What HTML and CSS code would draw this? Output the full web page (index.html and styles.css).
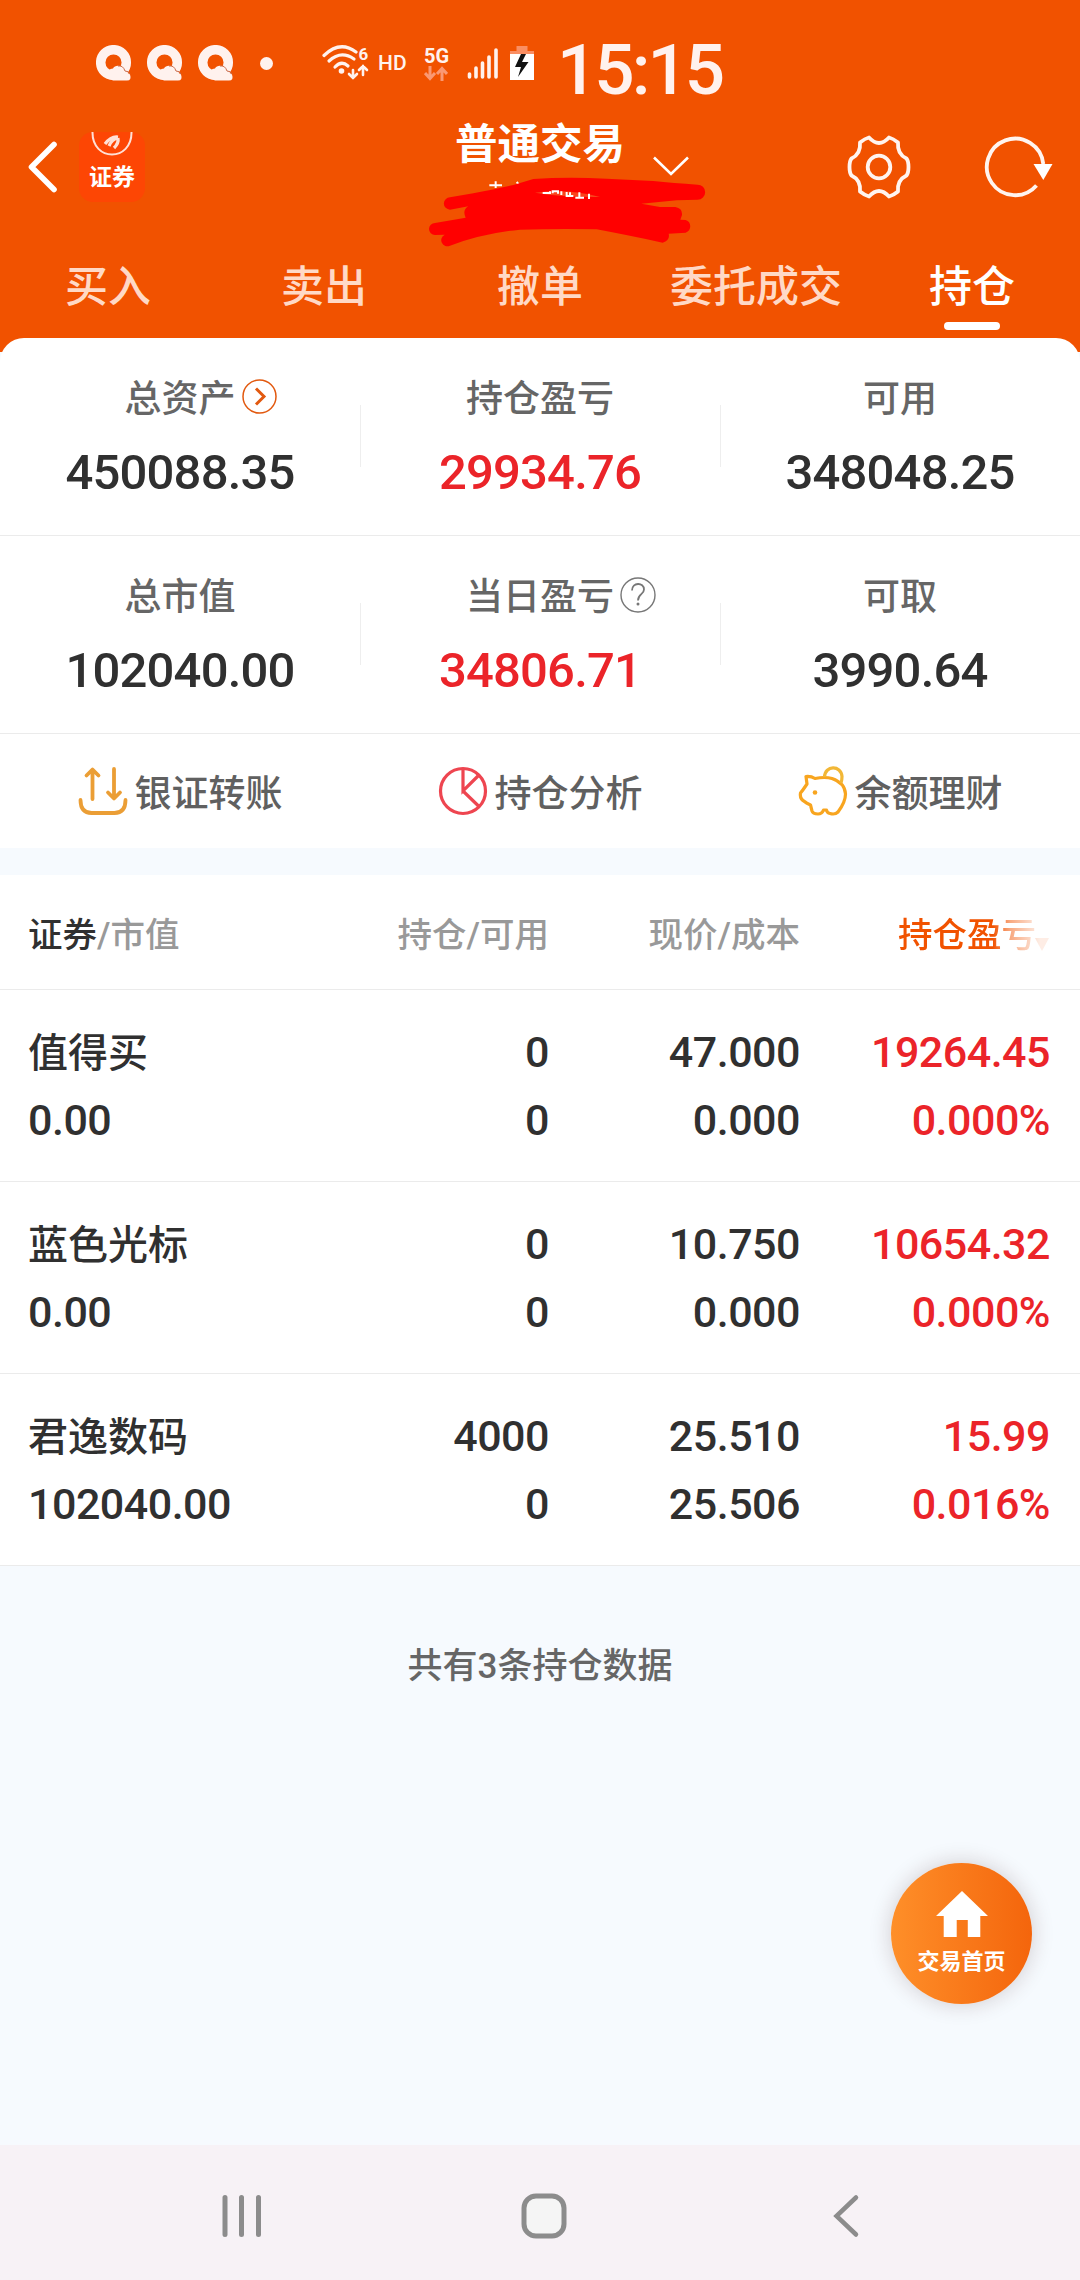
FILE: index.html
```html
<!DOCTYPE html>
<html lang="zh-CN">
<head>
  <meta charset="UTF-8" />
  <meta name="viewport" content="width=device-width, initial-scale=1.0"/>
  <title>普通交易 – 持仓</title>
  <link rel="stylesheet" href="styles.css">
</head>
<body>
  <div class="page">
    <div class="header">
      <div class="status-bar">
        <svg class="q-icons" width="138" height="36" viewBox="0 0 138 36">
          <defs>
            <g id="q">
              <circle cx="17.5" cy="17.5" r="12.8" fill="none" stroke="#fff2ee" stroke-width="9.5"/>
              <path d="M17 35.500a6.500 6.500 0 0 1-4-10q1-2 4-2c2-4 9-4 11 2l6 4q2 6-3 6z" fill="#fff2ee"/>
              <path d="M22 21q5-1 7 5q4 0 5 3" fill="none" stroke="#c96a4a" stroke-width="1"/>
            </g>
          </defs>
          <use href="#q"/>
          <use href="#q" x="51"/>
          <use href="#q" x="102"/>
        </svg>
        <span class="dot"></span>
        <svg class="wifi" width="52" height="52" viewBox="0 -8 52 52" fill="none" stroke="#fff2ee" stroke-width="3.2" stroke-linecap="round">
          <path d="M2 10.500Q18-5 34 7"/>
          <path d="M7 16Q19 5 32 14"/>
          <path d="M13 22Q19.500 15 26 21"/>
          <circle cx="19.500" cy="26" r="2.800" fill="#fff2ee" stroke="none"/>
          <path d="M31 25v8m-4-4l4 4l4-4M41 30v-9m-4 4l4-4l4 4" stroke-width="2.600"/>
          <text x="36.500" y="14.500" class="wifi-gen">6</text>
        </svg>
        <span class="hd">HD</span>
        <div class="network">
          <span>5G</span>
          <svg width="24" height="15" viewBox="0 0 24 15" fill="none" stroke="#fa9873" stroke-width="3">
            <path d="M6 0v12M1 7l5 5.500L11 7M18 15V3M13 8l5-5.500L23 8"/>
          </svg>
        </div>
        <svg class="signal" width="32" height="31" viewBox="0 0 32 31" stroke="#fff2ee" stroke-width="3.600" stroke-linecap="round">
          <path d="M2.500 26v3M9 20v9M15.500 15v14M22 9v20M29 2v27"/>
        </svg>
        <svg class="battery" width="24" height="34" viewBox="0 0 24 34">
          <path d="M6.500 0h11v5H24v3.500H0V5h6.500z" fill="#fa8e62"/>
          <path d="M0 8h24v26H0z" fill="#fff"/>
          <path d="M11 8L5 21h6l-3 10L18.500 16H12l4-8z" fill="#111"/>
        </svg>
        <span class="clock">15:15</span>
      </div>

      <div class="title-bar">
        <div class="title-left">
          <svg width="30" height="52" viewBox="0 0 30 52" fill="none" stroke="#fff" stroke-width="5.600" stroke-linecap="round" stroke-linejoin="round">
            <path d="M26 3.500L3.500 26L26 48.500"/>
          </svg>
          <div class="logo">
            <svg width="42" height="26" viewBox="0 0 42 26" fill="none" stroke="#ffe0d6" stroke-width="2">
              <path d="M1.500 0C1 30 41 30 40.500 0"/>
              <path d="M14 12q6-8 13-7M18 14q3-7 9-8M23 16q5-5 4-10" stroke-width="3.200"/>
            </svg>
            <span>证券</span>
          </div>
        </div>
        <div class="title">
          <h1>普通交易</h1>
          <svg class="chevron" width="36" height="20" viewBox="0 0 36 20" fill="none" stroke="#fff" stroke-width="2.600">
            <path d="M1 1.500L18 18L35 1.500"/>
          </svg>
          <svg class="scribble" width="290" height="75" viewBox="0 195 870 225">
            <path d="M208 226h38M227 214v20M290 216l12 14" stroke="#fff" stroke-width="6" fill="none"/>
            <path d="M90 262L160 250Q230 237 280 225L340 207Q440 200 560 206L700 213Q760 219 833 224a22 22 0 0 1 0 45L770 271L664 281L720 291H766q22 4 20 24l-5 14L797 330a20 20 0 0 1 0 38L746 371q5 20-18 27Q620 375 530 358Q410 356 300 359Q190 370 90 407a18 18 0 0 1-16-33L45 375a18 18 0 0 1 0-36L137 323Q126 300 145 289L90 299a18 18 0 0 1 0-37z" fill="#f00"/>
            <path d="M345 248Q450 236 540 261Q430 262 345 248z" fill="#f9431c"/>
            <path d="M368 249h22v-5M398 250v-6h16v7M424 244v11M440 246v12h20M450 247v12M466 263h26M478 247v16M507 251v16" fill="none" stroke="#fff" stroke-width="6"/>
          </svg>
        </div>
        <div class="title-right">
          <svg width="64" height="64" viewBox="-32 -32 64 64" fill="none" stroke="#fff4ef" stroke-width="3.800" stroke-linejoin="round">
            <path d="M-10-29.500Q-14-28.500-19-24.500Q-18-13-27.500-8.500Q-29.500-6-29.500 0T-27.500 8.500Q-18 13-19 24.500Q-14 28.500-10 29.500Q-5 24 0 24T10 29.500Q14 28.500 19 24.500Q18 13 27.500 8.500Q29.500 6 29.500 0T27.500-8.500Q18-13 19-24.500Q14-28.500 10-29.500Q5-24 0-24T-10-29.500z"/>
            <circle r="11.300"/>
          </svg>
          <svg width="70" height="64" viewBox="-32 -32 70 64" fill="none" stroke="#fff4ef" stroke-width="3.800">
            <path d="M21.500 18.500A28.300 28.300 0 1 1 28.300-3"/>
            <path d="M18.500-3h19L28.300 13z" fill="#fff" stroke="none"/>
          </svg>
        </div>
      </div>

      <div class="tabs">
        <div class="tab">买入</div>
        <div class="tab">卖出</div>
        <div class="tab">撤单</div>
        <div class="tab">委托成交</div>
        <div class="tab active">持仓</div>
      </div>
    </div>

    <div class="summary">
      <div class="summary-row">
        <div class="summary-item">
          <div class="label">总资产
            <svg class="label-icon" width="35" height="35" viewBox="0 0 35 35" fill="none" stroke="#e2590f">
              <circle cx="17.500" cy="17.500" r="16.500" stroke-width="1.500"/>
              <path d="M14 9.500l8 8l-8 8" stroke-width="3"/>
            </svg>
          </div>
          <div class="value">450088.35</div>
        </div>
        <div class="summary-item">
          <div class="label">持仓盈亏</div>
          <div class="value red">29934.76</div>
        </div>
        <div class="summary-item">
          <div class="label">可用</div>
          <div class="value">348048.25</div>
        </div>
      </div>
      <div class="summary-row">
        <div class="summary-item">
          <div class="label">总市值</div>
          <div class="value">102040.00</div>
        </div>
        <div class="summary-item">
          <div class="label">当日盈亏
            <svg class="label-icon" width="36" height="36" viewBox="0 0 36 36" fill="none" stroke="#777">
              <circle cx="18" cy="18" r="17" stroke-width="1.400"/>
              <path d="M12 13.500c0-8.500 12-8.500 12-1c0 5-6 4.500-6 11" stroke-width="1.800"/>
              <circle cx="18" cy="27" r="1.500" fill="#777" stroke="none"/>
            </svg>
          </div>
          <div class="value red">34806.71</div>
        </div>
        <div class="summary-item">
          <div class="label">可取</div>
          <div class="value">3990.64</div>
        </div>
      </div>
    </div>

    <div class="actions">
      <div class="action">
        <svg width="50" height="50" viewBox="0 0 50 50" fill="none" stroke="#eb9e35" stroke-width="3.800" stroke-linecap="round" stroke-linejoin="round">
          <path d="M2.500 34c0 9 4 13 11 13h23c7 0 11-4 11-13M14.500 33V4M8.500 9.500L14.500 3.500L20.500 9.500M36 3v29M30 26.500l6 6l6-6"/>
        </svg>
        <span>银证转账</span>
      </div>
      <div class="action">
        <svg width="50" height="50" viewBox="0 0 50 50" fill="none" stroke="#ee4550" stroke-width="3.200">
          <circle cx="25" cy="25" r="22.500"/>
          <path d="M25 2.500V25L41 9M25 25l16 15.500"/>
        </svg>
        <span>持仓分析</span>
      </div>
      <div class="action">
        <svg width="50" height="50" viewBox="0 0 50 50" fill="none" stroke="#f8a51f" stroke-width="3.200" stroke-linejoin="round">
          <path d="M8 10.500Q13 10 17 12.500Q27 10.500 34 12.500Q47 17 47.500 28Q47.500 36 40 46Q37 49 32 47.500Q29 47 28.500 44H25.500Q24 48 20 48Q15 48 14 45L12.500 39Q8 37 6.500 35.500Q1.500 33 2.500 27Q5 24 9 18z"/>
          <path d="M26.500 11C27-1 43-1 44 10.500Q44 14 43 17" stroke="#f2b736"/>
          <circle cx="17" cy="26.500" r="2.300" fill="#f8a51f" stroke="none"/>
        </svg>
        <span>余额理财</span>
      </div>
    </div>

    <div class="holdings">
      <div class="row head">
        <div><b>证券</b>/市值</div>
        <div>持仓/可用</div>
        <div>现价/成本</div>
        <div class="sort"><span>持仓盈亏</span><i></i></div>
      </div>
      <div class="row">
        <div><p class="name">值得买</p><p>0.00</p></div>
        <div><p>0</p><p>0</p></div>
        <div><p>47.000</p><p>0.000</p></div>
        <div class="red"><p>19264.45</p><p>0.000%</p></div>
      </div>
      <div class="row">
        <div><p class="name">蓝色光标</p><p>0.00</p></div>
        <div><p>0</p><p>0</p></div>
        <div><p>10.750</p><p>0.000</p></div>
        <div class="red"><p>10654.32</p><p>0.000%</p></div>
      </div>
      <div class="row">
        <div><p class="name">君逸数码</p><p>102040.00</p></div>
        <div><p>4000</p><p>0</p></div>
        <div><p>25.510</p><p>25.506</p></div>
        <div class="red"><p>15.99</p><p>0.016%</p></div>
      </div>
    </div>

    <p class="count">共有3条持仓数据</p>

    <div class="home-button">
      <svg width="52" height="46" viewBox="0 0 54 46" fill="#fff" preserveAspectRatio="none">
        <path d="M27 0L54 25H46V46H33V29H21.500V46H8V25H0z"/>
      </svg>
      <span>交易首页</span>
    </div>

    <div class="nav-bar">
      <svg width="42" height="44" viewBox="0 0 42 44" stroke="#8c8c8c" stroke-width="5" stroke-linecap="round">
        <path d="M4 3.500v37M20.500 3.500v37M37.500 3.500v37"/>
      </svg>
      <svg class="nav-home" width="46" height="46" viewBox="0 0 46 46">
        <rect x="3" y="3" width="40" height="40" rx="12" fill="#f5f5f5" stroke="#8c8c8c" stroke-width="5"/>
      </svg>
      <svg width="28" height="44" viewBox="0 0 28 44" fill="none" stroke="#8c8c8c" stroke-width="4.500" stroke-linecap="round">
        <path d="M24 3.500L4.500 22L24 40.500"/>
      </svg>
    </div>
  </div>
</body>
</html>
```
FILE: styles.css
```css
* {
  box-sizing: border-box;
}
body {
  margin: 0;
  font-family: Roboto, "Noto Sans CJK SC", sans-serif;
  font-weight: 500;
  color: #303030;
}
h1, p {
  margin: 0;
}
svg {
  display: block;
  flex-shrink: 0;
}
.page {
  position: relative;
  display: flex;
  flex-direction: column;
  width: 1080px;
  height: 2280px;
  background-color: #f6fafe;
  overflow: hidden;
}

/* header */
.header {
  height: 352px;
  background-color: #f15200;
  color: #fff;
}
.status-bar {
  display: flex;
  align-items: center;
  height: 97px;
  padding: 29px 0 0 96px;
  color: #fff2ee;
}
.dot {
  width: 13px;
  height: 13px;
  margin-left: 26px;
  border-radius: 50%;
  background-color: #fff2ee;
}
.wifi {
  margin-left: 49px;
}
.wifi-gen {
  font-size: 17px;
  font-weight: 700;
  fill: #fff2ee;
  stroke: none;
}
.hd {
  width: 30px;
  margin-left: 4px;
  font-size: 21px;
}
.network {
  width: 26px;
  margin-left: 16px;
  font-size: 20px;
  font-weight: 700;
  line-height: 20px;
}
.signal {
  margin-left: 17px;
}
.battery {
  margin-left: 11px;
}
.clock {
  margin: 14px 0 0 23px;
  font-size: 71px;
  line-height: 70px;
  letter-spacing: -3px;
}
.title-bar {
  display: grid;
  grid-template-columns: repeat(3, 360px);
  height: 140px;
}
.title-left {
  display: flex;
  align-items: center;
  gap: 21px;
  padding-left: 28px;
}
.logo {
  display: flex;
  flex-direction: column;
  align-items: center;
  width: 66px;
  height: 70px;
  border-radius: 14px;
  background-color: #fd4604;
  font-family: "Noto Sans CJK SC", sans-serif;
  font-size: 23px;
  font-weight: 700;
  line-height: 30px;
}
.logo span {
  margin-top: 2px;
}
.title {
  position: relative;
  display: flex;
  align-items: flex-start;
  padding: 23px 0 0 95px;
}
.title h1 {
  width: 171px;
  font-size: 42.5px;
  font-weight: 700;
  line-height: 50px;
  white-space: nowrap;
}
.chevron {
  margin: 36px 0 0 27px;
}
.scribble {
  position: absolute;
  left: 60px;
  top: 78px;
}
.title-right {
  display: flex;
  align-items: center;
  justify-content: flex-end;
  gap: 72px;
  padding-right: 27px;
}
.tabs {
  display: grid;
  grid-template-columns: repeat(5, 1fr);
  padding-top: 25px;
}
.tab {
  font-size: 43px;
  line-height: 50px;
  text-align: center;
  color: #ffd9c6;
}
.tab.active {
  color: #fff;
}
.tab.active::after {
  content: "";
  display: block;
  width: 56px;
  height: 8px;
  margin: 10px auto 0;
  border-radius: 4px;
  background-color: #fff;
}

/* account summary */
.summary {
  margin-top: -14px;
  border-radius: 24px 24px 0 0;
  background-color: #fff;
}
.summary-row {
  display: grid;
  grid-template-columns: repeat(3, 1fr);
  height: 198px;
  padding-top: 37px;
  border-bottom: 1px solid #ebebeb;
}
.summary-item {
  height: 100px;
  text-align: center;
}
.summary-item + .summary-item {
  background: linear-gradient(#eee, #eee) left 30px / 1px 62px no-repeat;
}
.label {
  position: relative;
  width: max-content;
  margin: 0 auto;
  font-size: 37px;
  line-height: 50px;
  color: #666;
}
.label-icon {
  position: absolute;
  left: calc(100% + 6px);
  top: 4px;
}
.value {
  margin-top: 20px;
  font-size: 49px;
  line-height: 56px;
  letter-spacing: -0.8px;
}
.red {
  color: #eb2429;
}
.actions {
  display: grid;
  grid-template-columns: repeat(3, 1fr);
  height: 114px;
  background-color: #fff;
}
.action {
  display: flex;
  align-items: center;
  justify-content: center;
  gap: 7px;
  font-size: 37px;
  color: #606060;
}

/* holdings table */
.holdings {
  margin-top: 27px;
  background-color: #fff;
}
.row {
  display: grid;
  grid-template-columns: 301px 220px 251px 250px;
  height: 192px;
  padding: 28px 0 0 28px;
  border-bottom: 1px solid #ebebeb;
  font-size: 43px;
  line-height: 68px;
  letter-spacing: -0.5px;
  text-align: right;
}
.row > :first-child {
  text-align: left;
}
.name {
  padding-top: 4px;
  font-size: 40px;
  line-height: 64px;
  letter-spacing: 0;
}
.row.head {
  height: 115px;
  padding-top: 26px;
  font-size: 34.5px;
  letter-spacing: 0;
  color: #999;
}
.head b {
  font-weight: 500;
  color: #303030;
}
.sort {
  display: flex;
  align-items: center;
  justify-content: flex-end;
  height: 68px;
  color: #f15200;
  -webkit-mask-image: linear-gradient(to right, #000 77%, rgba(0,0,0,0.5) 84%, rgba(0,0,0,0.1) 96%);
  mask-image: linear-gradient(to right, #000 77%, rgba(0,0,0,0.5) 84%, rgba(0,0,0,0.1) 96%);
}
.sort i {
  margin: 18px 1px 0 -1px;
  border: 7px solid transparent;
  border-top: 13px solid #f15200;
  border-bottom: 0;
}
.count {
  margin-top: 76px;
  font-size: 35px;
  line-height: 50px;
  text-align: center;
  color: #666;
}

/* floating button */
.home-button {
  position: absolute;
  left: 891px;
  top: 1863px;
  display: flex;
  flex-direction: column;
  align-items: center;
  width: 141px;
  height: 141px;
  padding-top: 28px;
  border-radius: 50%;
  background: linear-gradient(to right, #fe8f29, #f4650c);
  box-shadow: 0 0 22px rgba(60, 20, 20, 0.2);
  color: #fff;
  font-size: 22px;
  font-weight: 700;
  line-height: 30px;
}
.home-button span {
  margin-top: 10px;
}
.nav-bar {
  display: flex;
  align-items: center;
  justify-content: space-between;
  height: 135px;
  margin-top: auto;
  padding: 7px 220px 0 221px;
  background-color: #f7f2f6;
}
.nav-home {
  margin-right: 7px;
}
```
